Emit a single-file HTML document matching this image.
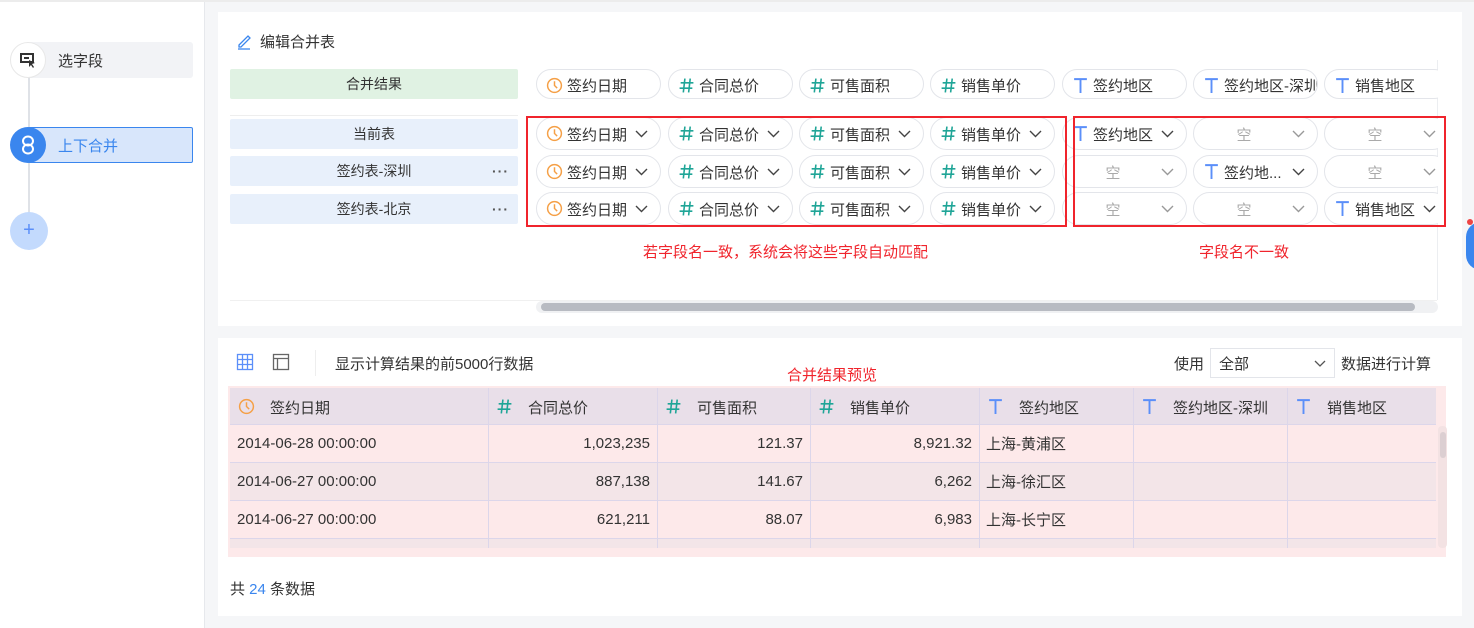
<!DOCTYPE html><html><head><meta charset="utf-8"><style>
*{box-sizing:border-box;margin:0;padding:0}
body{width:1474px;height:628px;background:#f5f6f8;font-family:"Liberation Sans","Noto Sans CJK SC",sans-serif;font-size:14px;color:#333;position:relative;overflow:hidden}
.a{position:absolute}
.pill{position:absolute;border:1px solid #e3e5ea;border-radius:17px;background:#fff;height:33px;white-space:nowrap;overflow:hidden}
.pill .ic{position:absolute;left:9px;top:7px;width:17px;height:17px}
.pill .tx{position:absolute;left:30px;top:6px;font-size:15px;color:#333}
.pill .cv{position:absolute;right:12px;top:12px}
.lab{position:absolute;left:230px;width:288px;height:30px;border-radius:2px;background:#e8f0fb;text-align:center;line-height:30px;font-size:14px;color:#333}
.dots{position:absolute;right:9px;top:0;letter-spacing:1px;font-weight:bold;color:#555}
.th,.td{position:absolute;font-size:15px;color:#333}
.num{line-height:24px}
</style></head><body>
<div class="a" style="left:0;top:0;width:205px;height:628px;background:#fff;border-right:1px solid #e6e8ec"></div>
<div class="a" style="left:0;top:0;width:1474px;height:2px;background:#ececec"></div>
<div class="a" style="left:28px;top:60px;width:2px;height:170px;background:#dfe2e7"></div>
<div class="a" style="left:28px;top:42px;width:165px;height:36px;background:#f2f3f6;border-radius:3px"></div>
<div class="a" style="left:10px;top:42px;width:36px;height:36px;border-radius:50%;background:#fff;border:1px solid #e8e8e8"></div>
<svg class="a" style="left:19px;top:51px" width="18" height="18" viewBox="0 0 18 18"><rect x="2" y="3" width="12" height="8" fill="none" stroke="#333" stroke-width="2"/><rect x="5" y="6" width="5" height="2" fill="#333"/><path d="M10 9l6 3-3 1 2 3-1 1-2-3-2 2z" fill="#333"/></svg>
<div class="a" style="left:58px;top:50px;font-size:15px;color:#333">选字段</div>
<div class="a" style="left:28px;top:127px;width:165px;height:36px;background:#d8e6fb;border:1px solid #3a86ee;border-radius:2px"></div>
<div class="a" style="left:10px;top:127px;width:36px;height:36px;border-radius:50%;background:#3a86ee"></div>
<svg class="a" style="left:19px;top:135px" width="18" height="20" viewBox="0 0 18 20"><ellipse cx="9" cy="6" rx="5" ry="4.5" fill="none" stroke="#fff" stroke-width="2"/><ellipse cx="9" cy="14" rx="5" ry="4.5" fill="none" stroke="#fff" stroke-width="2"/></svg>
<div class="a" style="left:58px;top:135px;font-size:15px;color:#3a86ee">上下合并</div>
<div class="a" style="left:10px;top:212px;width:38px;height:38px;border-radius:50%;background:#c3dafd;color:#5b8ff9;text-align:center;line-height:36px;font-size:20px">+</div>

<div class="a" style="left:218px;top:12px;width:1244px;height:314px;background:#fff"></div>
<div class="a" style="left:218px;top:338px;width:1244px;height:278px;background:#fff"></div>
<svg class="a" style="left:236px;top:32px" width="18" height="18" viewBox="0 0 18 18"><path d="M3 13l9-9 2 2-9 9H3z" fill="none" stroke="#3a86ee" stroke-width="1.3"/><path d="M2 17h12" stroke="#3a86ee" stroke-width="1.3"/></svg>
<div class="a" style="left:260px;top:31px;font-size:15px">编辑合并表</div>
<div class="lab" style="top:69px;background:#e0f2e3">合并结果</div>
<div class="a" style="left:230px;top:115px;width:288px;height:1px;background:#eee"></div>
<div class="lab" style="top:119px">当前表</div>
<div class="lab" style="top:156px">签约表-深圳<span class="dots">···</span></div>
<div class="lab" style="top:194px">签约表-北京<span class="dots">···</span></div>
<div class="a" style="left:1437px;top:60px;width:1px;height:240px;background:#eceef1"></div>
<div class="a" style="left:230px;top:300px;width:1207px;height:1px;background:#f0f0f0"></div>
<div class="a" style="left:536px;top:301px;width:902px;height:12px;background:#f0f1f3;border-radius:6px"></div>
<div class="a" style="left:541px;top:303px;width:874px;height:8px;background:#b8bbc2;border-radius:4px"></div>
<div id="pills"></div>
<div class="a" style="left:526px;top:116px;width:541px;height:111px;border:2px solid #f0242c"></div>
<div class="a" style="left:1073px;top:116px;width:373px;height:111px;border:2px solid #f0242c"></div>
<div class="a" style="left:643px;top:241px;color:#f0242c;font-size:15px">若字段名一致，系统会将这些字段自动匹配</div>
<div class="a" style="left:1199px;top:241px;color:#f0242c;font-size:15px">字段名不一致</div>
<div class="a" style="left:1466px;top:222px;width:30px;height:48px;border-radius:15px;background:#3a86ee"></div>
<div class="a" style="left:1467px;top:219px;width:6px;height:6px;border-radius:50%;background:#e44"></div>

<svg class="a" style="left:236px;top:353px" width="18" height="18" viewBox="0 0 18 18"><rect x="1.5" y="1.5" width="15" height="15" fill="none" stroke="#5b8ff9" stroke-width="1.3"/><path d="M1.5 6.5h15M1.5 11.5h15M6.5 1.5v15M11.5 1.5v15" stroke="#5b8ff9" stroke-width="1.3"/></svg>
<svg class="a" style="left:272px;top:353px" width="18" height="18" viewBox="0 0 18 18"><rect x="1.5" y="1.5" width="15" height="15" fill="none" stroke="#666" stroke-width="1.3"/><path d="M1.5 5.5h15M5.5 5.5v11" stroke="#666" stroke-width="1.3"/></svg>
<div class="a" style="left:315px;top:350px;width:1px;height:26px;background:#eee"></div>
<div class="a" style="left:335px;top:353px;font-size:15px">显示计算结果的前5000行数据</div>
<div class="a" style="left:787px;top:364px;color:#f0242c;font-size:15px">合并结果预览</div>
<div class="a" style="left:1174px;top:353px;font-size:15px">使用</div>
<div class="a" style="left:1210px;top:348px;width:125px;height:30px;border:1px solid #e3e5ea"><span class="a" style="left:8px;top:4px;font-size:15px">全部</span><svg class="a" style="right:8px;top:11px" width="12" height="8" viewBox="0 0 12 8"><path d="M1 1l5 5 5-5" fill="none" stroke="#555" stroke-width="1.3"/></svg></div>
<div class="a" style="left:1341px;top:353px;font-size:15px">数据进行计算</div>

<div class="a" style="left:228px;top:386px;width:1218px;height:171px;background:#fde9ea"></div>
<div class="a" style="left:230px;top:388px;width:1206px;height:36px;background:#e9dfe9"></div>
<div class="a" style="left:230px;top:462px;width:1206px;height:38px;background:#f3e5e8"></div>
<div class="a" style="left:230px;top:538px;width:1206px;height:10px;background:#f3e5e8"></div>
<div class="a" style="left:230px;top:424px;width:1206px;height:1px;background:#dcd6ea"></div>
<div class="a" style="left:230px;top:462px;width:1206px;height:1px;background:#dcd6ea"></div>
<div class="a" style="left:230px;top:500px;width:1206px;height:1px;background:#dcd6ea"></div>
<div class="a" style="left:230px;top:538px;width:1206px;height:1px;background:#dcd6ea"></div>
<div class="a" style="left:1438px;top:426px;width:9px;height:122px;background:#f3e2e3;border-radius:4px"></div>
<div class="a" style="left:1440px;top:432px;width:6px;height:26px;background:#dccfd2;border-radius:3px"></div>
<div id="tbl"></div>
<div class="a" style="left:230px;top:578px;font-size:15px">共 <span style="color:#3a86ee">24</span> 条数据</div>

<script>
var clock='<svg class="ic" viewBox="0 0 16 16"><circle cx="8" cy="8" r="6.5" fill="none" stroke="#f5a047" stroke-width="1.4"/><path d="M8 4v4l2.5 2.5" fill="none" stroke="#f5a047" stroke-width="1.4"/></svg>';
var hash='<svg class="ic" viewBox="0 0 16 16"><path d="M6.5 1.5L5 14.5M11.5 1.5L10 14.5M2.5 5.5h12M1.5 10.5h12" stroke="#1fa597" stroke-width="1.5"/></svg>';
var T='<svg class="ic" viewBox="0 0 16 16"><path d="M2 2h12M8 2v13" stroke="#5b8ff9" stroke-width="1.8"/></svg>';
var cv=function(c){return '<svg class="cv" width="13" height="8" viewBox="0 0 13 8"><path d="M1 1l5.5 5.5L12 1" fill="none" stroke="'+c+'" stroke-width="1.4"/></svg>';};
var xs=[536,668,799,930,1062,1193,1324];
var f=[[clock,'签约日期'],[hash,'合同总价'],[hash,'可售面积'],[hash,'销售单价'],[T,'签约地区'],[T,'签约地区-深圳'],[T,'销售地区']];
var h='';
function pill(x,y,ht,ic,t,chev,empty){
 var cut=Math.max(0,x+125-1438);
 var s='<div class="pill" style="left:'+x+'px;top:'+y+'px;width:125px;height:'+ht+'px;clip-path:inset(-2px '+cut+'px -2px -2px)">';
 if(empty){s+='<span class="tx" style="left:0;width:100px;text-align:center;color:#aaa;top:'+(ht==30?5:6)+'px">空</span>'}
 else{s+=ic+'<span class="tx" style="top:'+(ht==30?5:6)+'px">'+t+'</span>';}
 if(chev)s+=cv(empty?'#999':'#444');
 return s+'</div>';
}
for(var i=0;i<7;i++)h+=pill(xs[i],69,30,f[i][0],f[i][1],false,false);
var ys=[117,155,192];
var rows=[[4,-1,-1],[-1,'签约地...',-1],[-1,-1,6]];
for(var r=0;r<3;r++){
 for(var i=0;i<4;i++)h+=pill(xs[i],ys[r],33,f[i][0],f[i][1],true,false);
 for(var j=0;j<3;j++){var v=rows[r][j];var i=4+j;
  if(v===-1)h+=pill(xs[i],ys[r],33,'','',true,true);
  else h+=pill(xs[i],ys[r],33,f[i][0],typeof v=='string'?v:f[i][1],true,false);}
}
document.getElementById('pills').innerHTML=h;
var cx=[230,488,657,810,979,1133,1287,1436];
var t='';
for(var i=1;i<7;i++)t+='<div class="a" style="left:'+cx[i]+'px;top:388px;width:1px;height:160px;background:#dcd6ea"></div>';
for(var i=0;i<7;i++){t+='<div class="a" style="left:'+(cx[i]+8)+'px;top:398px;width:17px;height:17px">'+f[i][0].replace('class="ic"','width="17" height="17"')+'</div><div class="th" style="left:'+(cx[i]+40)+'px;top:397px">'+f[i][1]+'</div>';}
var d=[['2014-06-28 00:00:00','1,023,235','121.37','8,921.32','上海-黄浦区'],['2014-06-27 00:00:00','887,138','141.67','6,262','上海-徐汇区'],['2014-06-27 00:00:00','621,211','88.07','6,983','上海-长宁区']];
for(var r=0;r<3;r++){var y=433+r*38;
 t+='<div class="td num" style="left:237px;top:'+(y-1)+'px">'+d[r][0]+'</div>';
 for(var k=1;k<4;k++)t+='<div class="td num" style="left:'+cx[k]+'px;width:'+(cx[k+1]-cx[k]-7)+'px;text-align:right;top:'+(y-1)+'px">'+d[r][k]+'</div>';
 t+='<div class="td" style="left:986px;top:'+y+'px">'+d[r][4]+'</div>';}
document.getElementById('tbl').innerHTML=t;
</script>
</body></html>
